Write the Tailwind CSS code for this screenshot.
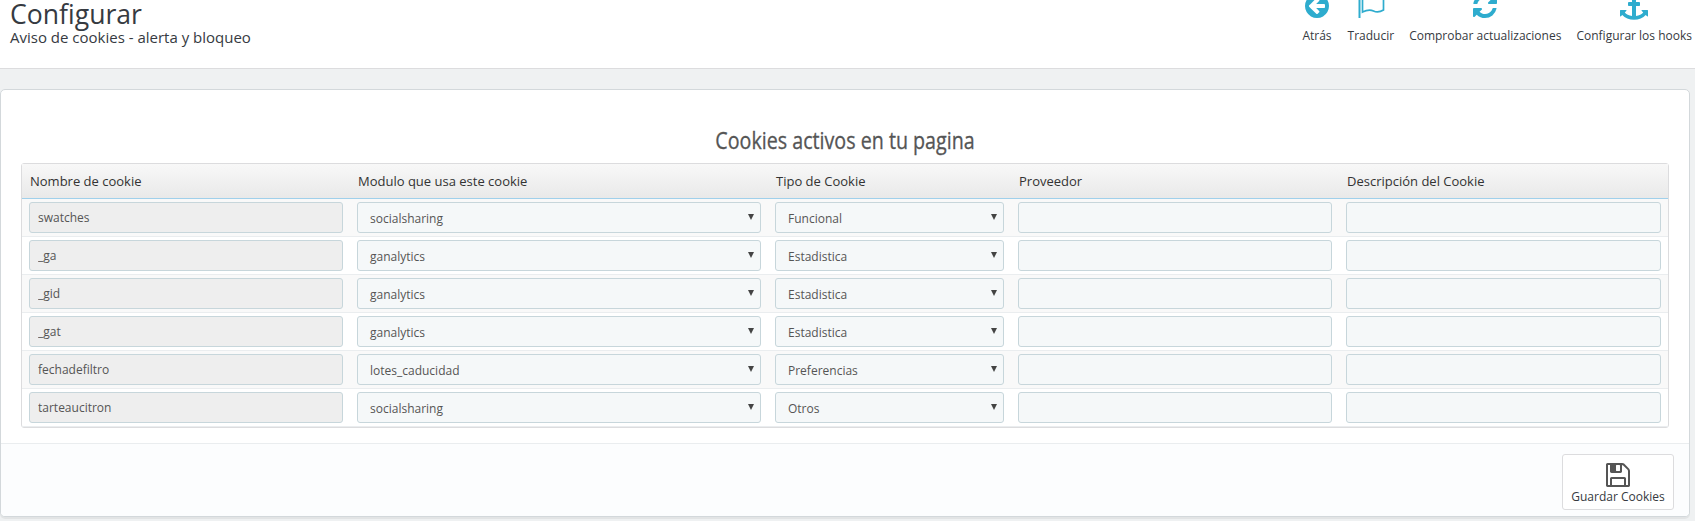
<!DOCTYPE html>
<html lang="es">
<head>
    <meta charset="UTF-8">
    <meta name="viewport" content="width=device-width, initial-scale=1.0">
    <title>Configurar - Aviso de cookies</title>
    <script src="https://cdn.jsdelivr.net/npm/@tailwindcss/browser@4"></script>
</head>
<body class="h-[521px] overflow-hidden bg-[#eff1f2] font-['Open_Sans',sans-serif] text-xs text-[#555]">
    <!-- Page header -->
    <header class="flex h-[69px] justify-between overflow-hidden border-b border-[#dcdcde] bg-white pl-[10px] pr-[3px] text-[#363a41]">
        <div>
            <h1 class="mt-px text-[26.6px] leading-[27px]">Configurar</h1>
            <p class="mt-[2px] text-[15px] leading-[15px]">Aviso de cookies - alerta y bloqueo</p>
        </div>
        <!-- Toolbar -->
        <nav class="-mt-2 flex gap-[15px] whitespace-nowrap leading-4">
            <a href="#" class="mr-px flex flex-col items-center gap-2">
                <svg class="h-7 w-6 fill-[#2eacce]" viewBox="0 0 1536 1792"><path d="M1280 960v-128q0-26-19-45t-45-19h-502l189-189q19-19 19-45t-19-45l-91-91q-18-18-45-18t-45 18l-362 362-91 91q-18 18-18 45t18 45l91 91 362 362q18 18 45 18t45-18l91-91q18-18 18-45t-18-45l-189-189h502q26 0 45-19t19-45zm256-64q0 209-103 385.5t-279.5 279.5-385.5 103-385.5-103-279.5-279.5-103-385.5 103-385.5 279.5-279.5 385.5-103 385.5 103 279.5 279.5 103 385.5z"/></svg>
                <span>Atrás</span>
            </a>
            <a href="#" class="flex flex-col items-center gap-2">
                <svg class="h-7 w-7 fill-none stroke-[#2eacce]" viewBox="0 0 28 28" stroke-width="1.7"><path d="M2.500 3v23" stroke-width="2"/><path d="M5.500 6.500C10 4 13 4 16 5.500s6 1.500 10.500-1v13.500c-4 2.500-7 2.500-10 1s-6-1.500-11 1z"/></svg>
                <span>Traducir</span>
            </a>
            <a href="#" class="flex flex-col items-center gap-2">
                <svg class="h-7 w-6 fill-[#2eacce]" viewBox="0 0 1536 1792"><path d="M1511 1056q0 5-1 7-64 268-268 434.5t-478 166.5q-146 0-282.5-55t-243.5-157l-129 129q-19 19-45 19t-45-19-19-45v-448q0-26 19-45t45-19h448q26 0 45 19t19 45-19 45l-137 137q71 66 161 102t187 36q134 0 250-65t186-179q11-17 53-117 8-23 30-23h192q13 0 22.5 9.5t9.5 22.5zm25-800v448q0 26-19 45t-45 19h-448q-26 0-45-19t-19-45 19-45l138-138q-148-137-349-137-134 0-250 65t-186 179q-11 17-53 117-8 23-30 23h-199q-13 0-22.500-9.500t-9.500-22.500v-7q65-268 270-434.500t480-166.500q146 0 284 55.500t245 156.500l130-129q19-19 45-19t45 19 19 45z"/></svg>
                <span>Comprobar actualizaciones</span>
            </a>
            <a href="#" class="flex flex-col items-center gap-2">
                <svg class="h-7 w-7 fill-[#2eacce]" viewBox="0 0 1792 1792"><path d="M960 256q0-26-19-45t-45-19-45 19-19 45 19 45 45 19 45-19 19-45zm832 928v352q0 22-20 30-8 2-12 2-12 0-23-9l-93-93q-119 143-318.500 226.500t-429.500 83.500-429.500-83.500-318.500-226.500l-93 93q-9 9-23 9-4 0-12-2-20-8-20-30v-352q0-14 9-23t23-9h352q22 0 30 20 8 19-7 35l-100 100q67 91 189.500 153.500t271.500 82.500v-647h-192q-26 0-45-19t-19-45v-128q0-26 19-45t45-19h192v-163q-58-34-93-92.500t-35-128.500q0-106 75-181t181-75 181 75 75 181q0 70-35 128.500t-93 92.500v163h192q26 0 45 19t19 45v128q0 26-19 45t-45 19h-192v647q149-20 271.500-82.500t189.500-153.500l-100-100q-15-16-7-35 8-20 30-20h352q14 0 23 9t9 23z"/></svg>
                <span>Configurar los hooks</span>
            </a>
        </nav>
    </header>

    <!-- Cookies panel -->
    <main class="mt-5 flex h-[428px] w-[1690px] flex-col overflow-hidden rounded-[5px] border border-[#d3d8db] bg-white shadow-[0_2px_0_rgba(0,0,0,0.05)]">
        <h2 class="mt-[35px] h-[38px] origin-center scale-x-[.855] text-center text-[23px] leading-[30px] [-webkit-text-stroke:0.3px_#555]">Cookies activos en tu pagina</h2>
        <div class="ml-5 w-[1648px] rounded-[3px] border border-[#dcdcde]">
            <div class="grid h-[35px] grid-cols-[328px_418px_243px_328px_329px] items-center border-b border-[#a0d0eb] bg-linear-to-b from-[#f8f8f8] to-[#e9e9e9] pt-[2px] text-[13px] text-[#333] *:pl-2">
                <span>Nombre de cookie</span>
                <span>Modulo que usa este cookie</span>
                <span>Tipo de Cookie</span>
                <span>Proveedor</span>
                <span>Descripción del Cookie</span>
            </div>
            <div id="cookieRows"></div>
        </div>
        <footer class="mt-auto flex h-[73px] justify-end border-t border-[#eaedef] bg-[#fcfdfe] pr-[15px] pt-[10px]">
            <button class="flex h-14 w-28 flex-col items-center rounded-[3px] border border-[#dcdcde] bg-white pt-[6px] leading-4 text-[#363a41]">
                <svg class="h-7 w-6 fill-[#555]" viewBox="0 0 1536 1792"><path d="M384 1536h768v-384h-768v384zm896 0h128v-896q0-14-10-38.500t-20-34.500l-281-281q-10-10-34-20t-39-10v416q0 40-28 68t-68 28h-576q-40 0-68-28t-28-68v-416h-128v1280h128v-416q0-40 28-68t68-28h832q40 0 68 28t28 68v416zm-384-928v-320q0-13-9.500-22.500t-22.500-9.500h-192q-13 0-22.500 9.500t-9.500 22.500v320q0 13 9.500 22.500t22.500 9.500h192q13 0 22.500-9.500t9.500-22.500zm640 32v928q0 40-28 68t-68 28h-1344q-40 0-68-28t-28-68v-1344q0-40 28-68t68-28h928q40 0 88 20t76 48l280 280q28 28 48 76t20 88z"/></svg>
                <span>Guardar Cookies</span>
            </button>
        </footer>
    </main>

    <script>
        const cookies = [
            { name: 'swatches', module: 'socialsharing', type: 'Funcional' },
            { name: '_ga', module: 'ganalytics', type: 'Estadistica' },
            { name: '_gid', module: 'ganalytics', type: 'Estadistica' },
            { name: '_gat', module: 'ganalytics', type: 'Estadistica' },
            { name: 'fechadefiltro', module: 'lotes_caducidad', type: 'Preferencias' },
            { name: 'tarteaucitron', module: 'socialsharing', type: 'Otros' }
        ];

        // Closed select box with its arrow
        function selectBox(value) {
            return `
                <div class="flex h-[31px] justify-between rounded-[3px] border border-[#c7d6db] bg-[#f5f8f9] pl-3 pr-[6px] pt-px leading-[29px]">
                    <span>${value}</span>
                    <svg class="mt-[10px] h-[6px] w-[6px] fill-[#444]" viewBox="0 0 6 6"><path d="M0 0h6L3 6z"/></svg>
                </div>`;
        }

        document.getElementById('cookieRows').innerHTML = cookies.map(cookie => `
            <div class="grid h-[38px] grid-cols-[328px_418px_243px_328px_329px] border-b border-[#eaedef] pt-[3px] odd:bg-[#f9f9f9] *:mx-[7px]">
                <input type="text" value="${cookie.name}" readonly class="h-[31px] rounded-[3px] border border-[#c7d6db] bg-[#eee] px-2">
                ${selectBox(cookie.module)}
                ${selectBox(cookie.type)}
                <input type="text" class="h-[31px] rounded-[3px] border border-[#c7d6db] bg-[#f5f8f9] px-2">
                <input type="text" class="h-[31px] rounded-[3px] border border-[#c7d6db] bg-[#f5f8f9] px-2">
            </div>
        `).join('');
    </script>
</body>
</html>
